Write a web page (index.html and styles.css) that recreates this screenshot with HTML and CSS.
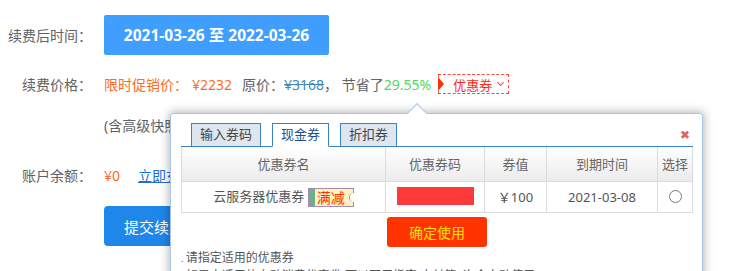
FILE: index.html
```html
<!DOCTYPE html>
<html lang="zh-CN">
  <head>
    <meta charset="UTF-8" />
    <title>续费</title>
    <link rel="stylesheet" href="styles.css">
  </head>
  <body>
    <div class="renew">
      <div class="row row-time">
        <span class="label">续费后时间：</span>
        <span class="date-btn">2021-03-26 至 2022-03-26</span>
      </div>

      <div class="row row-price">
        <span class="label">续费价格：</span>
        <span class="promo">限时促销价：</span>
        <span class="promo promo-num">¥2232</span>
        <span class="old">原价：<s>¥3168</s></span>
        <span class="save">， 节省了<em>29.55%</em></span>
        <span class="coupon-btn">优惠券<i class="chev"></i></span>
      </div>

      <div class="row row-note">
        <span class="label"></span>
        <span class="note">(含高级快照服务费用)</span>
      </div>

      <div class="row row-balance">
        <span class="label">账户余额：</span>
        <span class="promo">¥0</span>
        <a class="recharge" href="#">立即充值</a>
      </div>

      <div class="row row-submit">
        <span class="label"></span>
        <button class="submit">提交续费订单</button>
      </div>

      <div class="popup">
        <span class="arrow"></span>
        <div class="tabs">
          <span class="tab">输入券码</span>
          <span class="tab active">现金券</span>
          <span class="tab">折扣券</span>
          <span class="close">&#10006;</span>
        </div>
        <table class="coupons">
          <thead>
            <tr>
              <th class="c-name">优惠券名</th>
              <th class="c-code">优惠券码</th>
              <th class="c-val">券值</th>
              <th class="c-date">到期时间</th>
              <th class="c-pick">选择</th>
            </tr>
          </thead>
          <tbody>
            <tr>
              <td>云服务器优惠券 <span class="tag"><i></i>满减</span></td>
              <td><span class="code-mask"></span></td>
              <td>￥100</td>
              <td>2021-03-08</td>
              <td><span class="radio"></span></td>
            </tr>
          </tbody>
        </table>
        <div class="actions">
          <button class="confirm">确定使用</button>
        </div>
        <ul class="tips">
          <li>请指定适用的优惠券</li>
          <li>如果未适用的自动消费优惠券,可以不用指定,支付第1次会自动使用</li>
        </ul>
      </div>
    </div>
  </body>
</html>
```

FILE: styles.css
```css
* {
  box-sizing: border-box;
}

html,
body {
  height: 100%;
  overflow: hidden;
}

body {
  margin: 0;
  font-family: "Noto Sans", "Noto Sans CJK SC", sans-serif;
  font-size: 14px;
  color: #606266;
  background: #fff;
}

.renew {
  position: relative;
  height: 100%;
  padding-top: 15px;
}

.row {
  display: flex;
  align-items: center;
  white-space: nowrap;
}

.label {
  width: 92px;
  margin-right: 12px;
  text-align: right;
  flex-shrink: 0;
}

.row-time {
  height: 40px;
}

.row-price {
  height: 20px;
  margin-top: 19px;
}

.row-note {
  height: 20px;
  margin-top: 21px;
}

.row-balance {
  height: 20px;
  margin-top: 30px;
}

.row-submit {
  margin-top: 21px;
}

.date-btn {
  display: inline-block;
  width: 225px;
  height: 40px;
  line-height: 40px;
  text-align: center;
  background: #409eff;
  color: #fff;
  font-weight: bold;
  font-size: 15.5px;
  border-radius: 2px;
}

.promo {
  color: #ff6a28;
}

.promo-num {
  margin-left: 4px;
}

.old {
  margin-left: 10px;
}

.old s {
  color: #3f8ab5;
}

.save em {
  font-style: normal;
  color: #4cd964;
}

.coupon-btn {
  position: relative;
  display: inline-flex;
  align-items: center;
  height: 20px;
  margin-left: 7px;
  padding: 0 5px 0 14px;
  border: 1px dashed #ff4a3a;
  color: #ff2a1a;
  font-size: 13px;
}

.coupon-btn::before {
  content: "";
  position: absolute;
  left: -1px;
  top: 2px;
  border-left: 6px solid #ff3300;
  border-top: 7px solid transparent;
  border-bottom: 7px solid transparent;
}

.chev {
  width: 5px;
  height: 5px;
  margin-left: 6px;
  margin-top: -3px;
  border-right: 1px solid #ff4a3a;
  border-bottom: 1px solid #ff4a3a;
  transform: rotate(45deg);
}

.note {
  color: #606266;
}

.recharge {
  margin-left: 18px;
  color: #1e6fd0;
}

.submit {
  width: 130px;
  height: 40px;
  border: none;
  border-radius: 4px;
  background: #1f87ea;
  color: #fff;
  font-family: inherit;
  font-size: 15px;
}

/* coupon popup */
.popup {
  position: absolute;
  left: 170px;
  top: 113px;
  width: 533px;
  height: 180px;
  padding: 9px 9px 0 10px;
  background: #fff;
  border: 1px solid #a9c6ea;
  border-radius: 3px;
  box-shadow: 0 0 10px 1px rgba(0, 0, 0, 0.3);
  font-size: 13px;
  color: #555;
}

.arrow {
  position: absolute;
  left: 239px;
  top: -8px;
  width: 14px;
  height: 14px;
  background: #fff;
  border-left: 1px solid #a9c6ea;
  border-top: 1px solid #a9c6ea;
  transform: rotate(45deg);
}

.tabs {
  position: relative;
  display: flex;
  gap: 11px;
  padding-left: 10px;
  height: 24px;
  border-bottom: 1px solid #3a84c4;
}

.tab {
  height: 24px;
  padding: 0 8px;
  line-height: 21px;
  background: #dfe6f0;
  border: 1px solid #3a84c4;
  color: #444;
}

.tab.active {
  background: #fff;
  border-bottom-color: #fff;
  color: #1d4f8a;
}

.close {
  position: absolute;
  right: 3px;
  top: 6px;
  font-size: 12px;
  line-height: 1;
  color: #e06060;
}

.coupons {
  width: 512px;
  border-collapse: collapse;
  table-layout: fixed;
}

.coupons th,
.coupons td {
  border: 1px solid #dcdcdc;
  text-align: center;
  font-weight: normal;
  padding: 0;
}

.coupons th {
  height: 34px;
  color: #666;
  background: linear-gradient(#fff, #ebebeb);
  border-top: none;
}

.coupons td {
  height: 31px;
  color: #555;
}

.c-name {
  width: 204px;
}

.c-code {
  width: 99px;
}

.c-val {
  width: 62px;
}

.c-date {
  width: 111px;
}

.tag {
  position: relative;
  display: inline-flex;
  align-items: center;
  height: 19px;
  padding-right: 8px;
  vertical-align: middle;
  background: #fdf1c2;
  border: 1px solid #a28cb0;
  color: #ff3300;
  font-size: 14px;
  line-height: 17px;
}

.tag i {
  width: 6px;
  height: 17px;
  margin-right: 2px;
  background: #6faf8e;
}

.tag::after {
  content: "";
  position: absolute;
  right: -4px;
  top: 4px;
  width: 7px;
  height: 9px;
  border-radius: 50%;
  background: #fff;
  border-left: 1px solid #a28cb0;
}

.code-mask {
  display: inline-block;
  width: 77px;
  height: 18px;
  margin-top: 3px;
  background: #fc3a3a;
}

.radio {
  display: inline-block;
  width: 13px;
  height: 13px;
  margin-top: 4px;
  border: 1px solid #777;
  border-radius: 50%;
}

.actions {
  display: flex;
  justify-content: center;
  padding-top: 4px;
}

.confirm {
  width: 100px;
  height: 30px;
  border: none;
  border-radius: 3px;
  background: #ff3300;
  color: #ffe400;
  font-family: inherit;
  font-size: 14px;
}

.tips {
  list-style: none;
  margin: 2px 0 0;
  padding: 0;
  font-size: 12px;
  line-height: 17px;
}

.tips li::before {
  content: ". ";
  font-size: 9px;
}
```
